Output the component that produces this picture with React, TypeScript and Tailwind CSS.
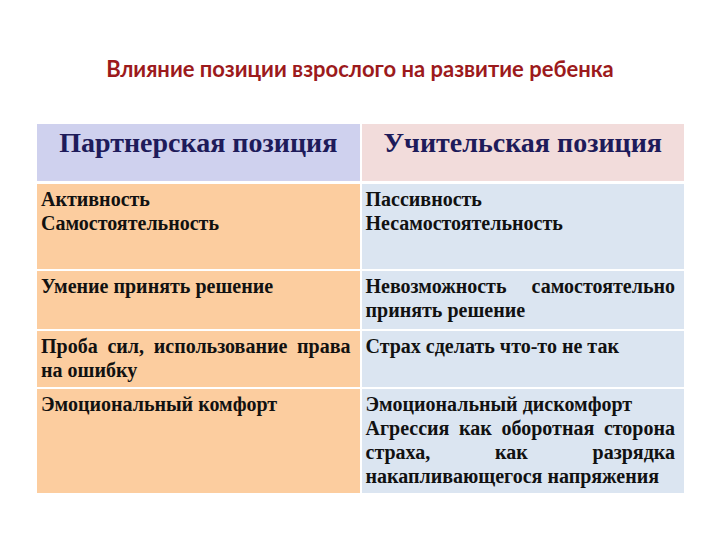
type Line = { text: string; justify?: boolean };

const body: { h: string; left: Line[]; right: Line[] }[] = [
  {
    h: 'h-[85px]',
    left: [{ text: 'Активность' }, { text: 'Самостоятельность' }],
    right: [{ text: 'Пассивность' }, { text: 'Несамостоятельность' }],
  },
  {
    h: 'h-[58px]',
    left: [{ text: 'Умение принять решение' }],
    right: [
      { text: 'Невозможность самостоятельно', justify: true },
      { text: 'принять решение' },
    ],
  },
  {
    h: 'h-[56px]',
    left: [
      { text: 'Проба сил, использование права', justify: true },
      { text: 'на ошибку' },
    ],
    right: [{ text: 'Страх сделать что-то не так' }],
  },
  {
    h: 'h-[104px]',
    left: [{ text: 'Эмоциональный комфорт' }],
    right: [
      { text: 'Эмоциональный дискомфорт' },
      { text: 'Агрессия как оборотная сторона', justify: true },
      { text: 'страха, как разрядка', justify: true },
      { text: 'накапливающегося напряжения' },
    ],
  },
];

function Cell({ lines, bg }: { lines: Line[]; bg: string }) {
  return (
    <div className={`${bg} pl-[4px] pr-[9px] pt-[3px]`}>
      {lines.map((l, i) => (
        <div
          key={i}
          className={
            l.justify
              ? 'text-justify [text-align-last:justify] whitespace-nowrap'
              : 'whitespace-nowrap'
          }
        >
          {l.text}
        </div>
      ))}
    </div>
  );
}

export default function App() {
  return (
    <div className="w-[720px] h-[540px] bg-white overflow-hidden">
      <div
        className="pt-[54px] text-center text-[#9c1a1c] text-[22px] font-bold leading-[30px]"
        style={{ fontFamily: 'Lato, "Liberation Sans", sans-serif' }}
      >
        Влияние позиции взрослого на развитие ребенка
      </div>
      <div
        className="mt-[40px] ml-[37px] w-[647px] flex flex-col"
        style={{ fontFamily: '"Liberation Serif", "Times New Roman", serif' }}
      >
        <div className="grid grid-cols-2 gap-[2px] h-[57px] text-[#1e1b5a] text-[28px] font-bold leading-[36px]">
          <div className="bg-[#cfd1ee] text-center pt-[1px]">Партнерская позиция</div>
          <div className="bg-[#f2dcdb] text-center pt-[1px]">Учительская позиция</div>
        </div>
        <div className="mt-[3px] flex flex-col gap-[2px] text-[20px] font-bold leading-[24px] text-[#111]">
          {body.map((r, i) => (
            <div key={i} className={`grid grid-cols-2 gap-[2px] ${r.h}`}>
              <Cell lines={r.left} bg="bg-[#fccd9f]" />
              <Cell lines={r.right} bg="bg-[#dbe5f1]" />
            </div>
          ))}
        </div>
      </div>
    </div>
  );
}
